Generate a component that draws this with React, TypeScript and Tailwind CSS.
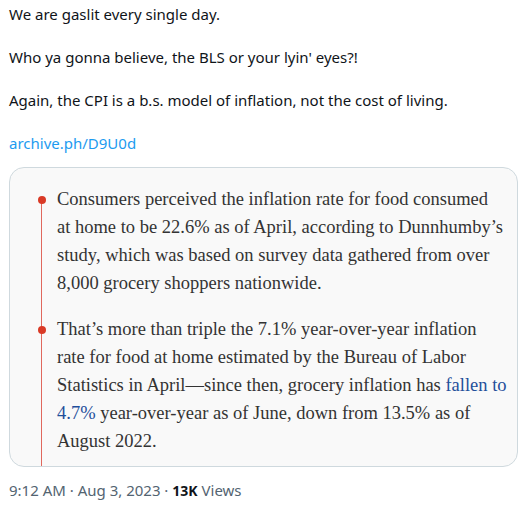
import React from "react";

const serif = { fontFamily: '"Liberation Serif", "Times New Roman", serif' };

export default function App() {
  return (
    <div className="w-[522px] h-[511px] bg-white overflow-hidden pl-[9px] pr-[4px] pt-[4px]">
      <div
        className="text-[15px] leading-[21.5px] text-[#0f1419]"
        style={{ fontFamily: '"Segoe UI", "Noto Sans", sans-serif' }}
      >
        <p>We are gaslit every single day.</p>
        <p className="mt-[21.5px]">Who ya gonna believe, the BLS or your lyin' eyes?!</p>
        <p className="mt-[21.5px]">Again, the CPI is a b.s. model of inflation, not the cost of living.</p>
        <p className="mt-[21.5px] text-[#1d9bf0]">archive.ph/D9U0d</p>
      </div>

      <div className="relative mt-[12px] h-[300px] w-[509px] rounded-[15px] border border-[#cfd9de] bg-[#f9f9f9] overflow-hidden">
        <div className="absolute left-[31px] top-[32px] bottom-0 w-px bg-[#e0685d]" />
        <div className="pl-[47px] pt-[17px] text-[18.5px] leading-[28px] text-[#333333] whitespace-nowrap" style={serif}>
          <div className="relative">
            <span className="absolute left-[-19px] top-[11px] h-[8px] w-[8px] rounded-full bg-[#d93a26]" />
            Consumers perceived the inflation rate for food consumed
            <br />
            at home to be 22.6% as of April, according to Dunnhumby’s
            <br />
            study, which was based on survey data gathered from over
            <br />
            8,000 grocery shoppers nationwide.
          </div>
          <div className="relative mt-[18px]">
            <span className="absolute left-[-19px] top-[11px] h-[8px] w-[8px] rounded-full bg-[#d93a26]" />
            That’s more than triple the 7.1% year-over-year inflation
            <br />
            rate for food at home estimated by the Bureau of Labor
            <br />
            Statistics in April—since then, grocery inflation has{" "}
            <span className="text-[#1f4f9b]">fallen to</span>
            <br />
            <span className="text-[#1f4f9b]">4.7%</span> year-over-year as of June, down from 13.5% as of
            <br />
            August 2022.
          </div>
        </div>
      </div>

      <div
        className="mt-[13px] text-[15px] leading-[20px] text-[#536471]"
        style={{ fontFamily: '"Segoe UI", "Noto Sans", sans-serif' }}
      >
        9:12 AM · Aug 3, 2023 · <span className="font-bold text-[#0f1419] text-[14px]">13K</span> Views
      </div>
    </div>
  );
}
